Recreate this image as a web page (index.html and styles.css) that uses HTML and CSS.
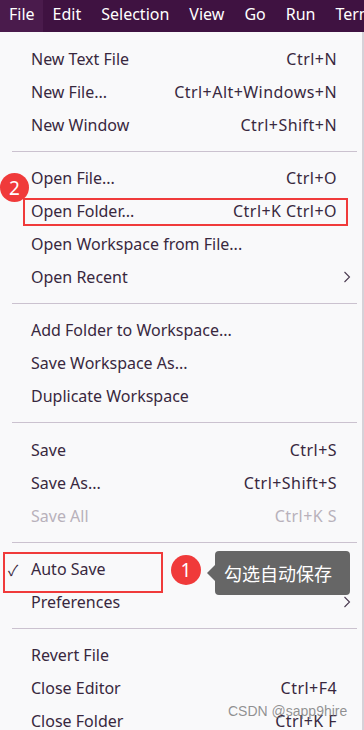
FILE: index.html
```html
<!DOCTYPE html>
<html lang="en">
<head>
    <meta charset="UTF-8">
    <meta name="viewport" content="width=device-width, initial-scale=1.0">
    <title>File Menu</title>
    <link rel="stylesheet" href="styles.css">
</head>
<body>
    <div class="menubar">
        <div class="bar-item active">File</div>
        <div class="bar-item">Edit</div>
        <div class="bar-item">Selection</div>
        <div class="bar-item">View</div>
        <div class="bar-item">Go</div>
        <div class="bar-item">Run</div>
        <div class="bar-item">Terminal</div>
    </div>

    <div class="menu">
        <div class="row"><span>New Text File</span><span class="key">Ctrl+N</span></div>
        <div class="row"><span>New File...</span><span class="key">Ctrl+Alt+Windows+N</span></div>
        <div class="row"><span>New Window</span><span class="key">Ctrl+Shift+N</span></div>
        <div class="sep"></div>

        <div class="row">
            <span>Open File...</span><span class="key">Ctrl+O</span>
            <div class="badge badge-two">2</div>
        </div>
        <div class="row">
            <span>Open Folder...</span><span class="key">Ctrl+K Ctrl+O</span>
            <div class="mark mark-folder"></div>
        </div>
        <div class="row"><span>Open Workspace from File...</span></div>
        <div class="row">
            <span>Open Recent</span>
            <svg class="chev" width="8" height="12" viewBox="0 0 8 12"><path d="M1.5 1 L6.5 6 L1.5 11" fill="none" stroke="#4a3a50" stroke-width="1.1"/></svg>
        </div>
        <div class="sep"></div>

        <div class="row"><span>Add Folder to Workspace...</span></div>
        <div class="row"><span>Save Workspace As...</span></div>
        <div class="row"><span>Duplicate Workspace</span></div>
        <div class="sep"></div>

        <div class="row"><span>Save</span><span class="key">Ctrl+S</span></div>
        <div class="row"><span>Save As...</span><span class="key">Ctrl+Shift+S</span></div>
        <div class="row disabled"><span>Save All</span><span class="key">Ctrl+K S</span></div>
        <div class="sep"></div>

        <div class="row">
            <span class="check">&#x2713;</span>
            <span>Auto Save</span>
            <div class="mark mark-auto"></div>
            <div class="badge badge-one">1</div>
            <div class="tip">勾选自动保存</div>
        </div>
        <div class="row">
            <span>Preferences</span>
            <svg class="chev" width="8" height="12" viewBox="0 0 8 12"><path d="M1.5 1 L6.5 6 L1.5 11" fill="none" stroke="#4a3a50" stroke-width="1.1"/></svg>
        </div>
        <div class="sep"></div>

        <div class="row"><span>Revert File</span></div>
        <div class="row"><span>Close Editor</span><span class="key">Ctrl+F4</span></div>
        <div class="row"><span>Close Folder</span><span class="key">Ctrl+K F</span></div>

        <div class="watermark">CSDN @sapp9hire</div>
    </div>
</body>
</html>
```

FILE: styles.css
```css
:root {
    --bar-bg: #3f1241;
    --menu-bg: #f9f9fa;
    --menu-fg: #38283e;
    --mark-red: #f03a3a;
}

body {
    margin: 0;
    width: 364px;
    height: 730px;
    overflow: hidden;
    background-color: var(--menu-bg);
    font-family: "Noto Sans", "Noto Sans CJK SC", sans-serif;
}

.menubar {
    display: flex;
    height: 32px;
    padding-bottom: 4px;
    box-sizing: border-box;
    background-color: var(--bar-bg);
    color: #ffffff;
    font-size: 16px;
    white-space: nowrap;
    overflow: hidden;
}

.bar-item {
    display: flex;
    align-items: center;
    padding: 0 10px;
}

.bar-item.active {
    padding-left: 9px;
    padding-right: 8px;
    margin-bottom: -4px;
    padding-bottom: 4px;
    background-color: #4a1b4c;
}

.menu {
    position: relative;
    padding-top: 10px;
    height: 698px;
    border-right: 2px solid #d6d2d8;
    box-sizing: border-box;
    color: var(--menu-fg);
    font-size: 16px;
}

.row {
    position: relative;
    display: flex;
    align-items: center;
    justify-content: space-between;
    height: 33px;
    padding: 0 25px 0 31px;
    white-space: nowrap;
}

.key {
    letter-spacing: 0.45px;
}

.row.disabled {
    color: #b8b1bb;
}

.chev {
    margin-right: -14px;
}

.check {
    position: absolute;
    left: 8px;
    font-size: 15px;
}

.sep {
    height: 20.4px;
    display: flex;
    align-items: center;
    padding: 0 5px 0 12px;
}

.sep::after {
    content: "";
    flex: 1;
    height: 1px;
    background-color: #cbc2cf;
}

.mark {
    position: absolute;
    border: 2px solid var(--mark-red);
    box-sizing: border-box;
}

.mark-folder {
    left: 23px;
    right: 14px;
    top: 4px;
    bottom: 1px;
}

.mark-auto {
    left: 3px;
    width: 160px;
    top: -1px;
    height: 41px;
}

.badge {
    position: absolute;
    display: flex;
    align-items: center;
    justify-content: center;
    border-radius: 50%;
    background-color: var(--mark-red);
    color: #ffffff;
    font-size: 19px;
}

.badge-two {
    left: 0;
    top: 12px;
    width: 29px;
    height: 29px;
}

.badge-one {
    left: 171px;
    top: 2px;
    width: 30px;
    height: 30px;
}

.tip {
    position: absolute;
    left: 215px;
    top: -2px;
    width: 135px;
    height: 44px;
    display: flex;
    align-items: center;
    padding-left: 9px;
    box-sizing: border-box;
    border-radius: 4px;
    background-color: #666666;
    color: #ffffff;
    font-size: 18px;
}

.tip::before {
    content: "";
    position: absolute;
    left: -8px;
    top: 14px;
    border-style: solid;
    border-width: 8px 8px 8px 0;
    border-color: transparent #666666 transparent transparent;
}

.watermark {
    position: absolute;
    left: 228px;
    top: 671px;
    color: rgba(110, 110, 110, 0.75);
    font-family: "Liberation Sans", Arial, sans-serif;
    font-size: 14px;
}
```
